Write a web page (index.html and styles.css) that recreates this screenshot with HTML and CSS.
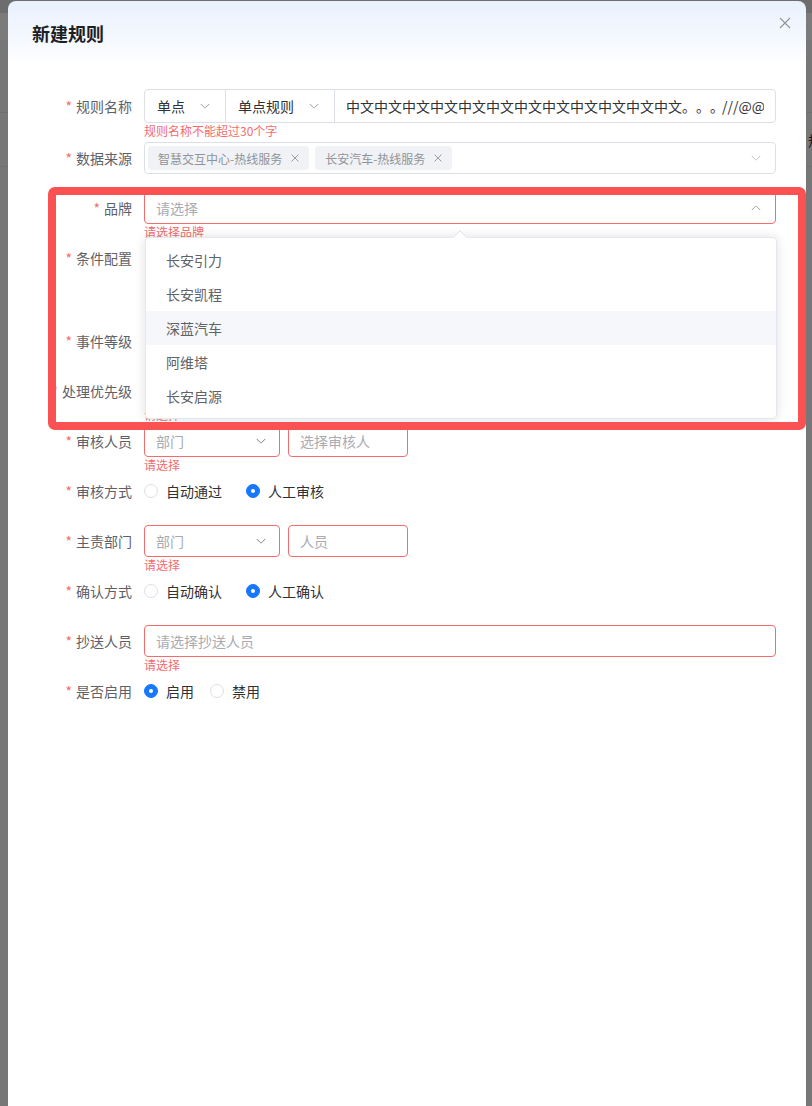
FILE: index.html
```html
<!DOCTYPE html>
<html lang="zh-CN">
<head>
<meta charset="utf-8">
<title>新建规则</title>
<link rel="stylesheet" href="styles.css">
</head>
<body>
<div class="stage">
<div class="modal">
  <div class="modal-head">
    <h1 class="title">新建规则</h1>
    <span class="close"><svg viewBox="0 0 12 12"><path d="M1 1L11 11M11 1L1 11"/></svg></span>
  </div>

  <div class="form">
    <div class="item has-err first">
      <div class="lbl"><span class="req">*</span>规则名称</div>
      <div class="ctrl">
        <div class="group">
          <div class="gsel s1"><span>单点</span><svg class="chev" viewBox="0 0 1024 1024"><path d="M831.872 340.864 512 652.672 192.128 340.864a30.592 30.592 0 0 0-42.752 0 29.12 29.12 0 0 0 0 41.6L489.664 714.24a32 32 0 0 0 44.672 0l340.288-331.712a29.12 29.12 0 0 0 0-41.728 30.592 30.592 0 0 0-42.752 0z"/></svg></div>
          <div class="gsel s2"><span>单点规则</span><svg class="chev" viewBox="0 0 1024 1024"><path d="M831.872 340.864 512 652.672 192.128 340.864a30.592 30.592 0 0 0-42.752 0 29.12 29.12 0 0 0 0 41.6L489.664 714.24a32 32 0 0 0 44.672 0l340.288-331.712a29.12 29.12 0 0 0 0-41.728 30.592 30.592 0 0 0-42.752 0z"/></svg></div>
          <div class="ginput"><div class="clip">中文中文中文中文中文中文中文中文中文中文中文中文<span class="dots">。。。</span>///@@@@@@</div></div>
        </div>
        <div class="err e19">规则名称不能超过30个字</div>
      </div>
    </div>

    <div class="item">
      <div class="lbl"><span class="req">*</span>数据来源</div>
      <div class="ctrl">
        <div class="box tags-box">
          <div class="tags">
            <span class="tag">智慧交互中心-热线服务<svg class="tag-x" viewBox="0 0 10 10"><path d="M1.5 1.5L8.5 8.5M8.5 1.5L1.5 8.5"/></svg></span>
            <span class="tag">长安汽车-热线服务<svg class="tag-x" viewBox="0 0 10 10"><path d="M1.5 1.5L8.5 8.5M8.5 1.5L1.5 8.5"/></svg></span>
          </div>
          <svg class="chev light" viewBox="0 0 1024 1024"><path d="M831.872 340.864 512 652.672 192.128 340.864a30.592 30.592 0 0 0-42.752 0 29.12 29.12 0 0 0 0 41.6L489.664 714.24a32 32 0 0 0 44.672 0l340.288-331.712a29.12 29.12 0 0 0 0-41.728 30.592 30.592 0 0 0-42.752 0z"/></svg>
        </div>
      </div>
    </div>

    <div class="item has-err">
      <div class="lbl"><span class="req">*</span>品牌</div>
      <div class="ctrl anchor">
        <div class="box red">
          <span class="ph">请选择</span>
          <svg class="chev up" viewBox="0 0 1024 1024"><path d="M831.872 340.864 512 652.672 192.128 340.864a30.592 30.592 0 0 0-42.752 0 29.12 29.12 0 0 0 0 41.6L489.664 714.24a32 32 0 0 0 44.672 0l340.288-331.712a29.12 29.12 0 0 0 0-41.728 30.592 30.592 0 0 0-42.752 0z"/></svg>
        </div>
        <div class="err">请选择品牌</div>
        <div class="dropdown">
          <span class="pop-arrow"></span>
          <ul class="options">
            <li>长安引力</li>
            <li>长安凯程</li>
            <li class="hover">深蓝汽车</li>
            <li>阿维塔</li>
            <li>长安启源</li>
          </ul>
        </div>
      </div>
    </div>

    <div class="item">
      <div class="lbl"><span class="req">*</span>条件配置</div>
      <div class="ctrl tall"></div>
    </div>

    <div class="item">
      <div class="lbl"><span class="req">*</span>事件等级</div>
      <div class="ctrl blank"></div>
    </div>

    <div class="item has-err">
      <div class="lbl"><span class="req">*</span>处理优先级</div>
      <div class="ctrl">
        <div class="blank"></div>
        <div class="err">请选择</div>
      </div>
    </div>

    <div class="item has-err">
      <div class="lbl"><span class="req">*</span>审核人员</div>
      <div class="ctrl">
        <div class="pair">
          <div class="box red dept"><span class="ph">部门</span><svg class="chev dark" viewBox="0 0 1024 1024"><path d="M831.872 340.864 512 652.672 192.128 340.864a30.592 30.592 0 0 0-42.752 0 29.12 29.12 0 0 0 0 41.6L489.664 714.24a32 32 0 0 0 44.672 0l340.288-331.712a29.12 29.12 0 0 0 0-41.728 30.592 30.592 0 0 0-42.752 0z"/></svg></div>
          <div class="box red person"><span class="ph">选择审核人</span></div>
        </div>
        <div class="err">请选择</div>
      </div>
    </div>

    <div class="item">
      <div class="lbl"><span class="req">*</span>审核方式</div>
      <div class="ctrl">
        <div class="radios wide">
          <span class="radio"><span class="dot"></span>自动通过</span>
          <span class="radio on"><span class="dot"></span>人工审核</span>
        </div>
      </div>
    </div>

    <div class="item has-err">
      <div class="lbl"><span class="req">*</span>主责部门</div>
      <div class="ctrl">
        <div class="pair">
          <div class="box red dept"><span class="ph">部门</span><svg class="chev dark" viewBox="0 0 1024 1024"><path d="M831.872 340.864 512 652.672 192.128 340.864a30.592 30.592 0 0 0-42.752 0 29.12 29.12 0 0 0 0 41.6L489.664 714.24a32 32 0 0 0 44.672 0l340.288-331.712a29.12 29.12 0 0 0 0-41.728 30.592 30.592 0 0 0-42.752 0z"/></svg></div>
          <div class="box red person"><span class="ph">人员</span></div>
        </div>
        <div class="err">请选择</div>
      </div>
    </div>

    <div class="item">
      <div class="lbl"><span class="req">*</span>确认方式</div>
      <div class="ctrl">
        <div class="radios wide">
          <span class="radio"><span class="dot"></span>自动确认</span>
          <span class="radio on"><span class="dot"></span>人工确认</span>
        </div>
      </div>
    </div>

    <div class="item has-err">
      <div class="lbl"><span class="req">*</span>抄送人员</div>
      <div class="ctrl">
        <div class="box red"><span class="ph">请选择抄送人员</span></div>
        <div class="err">请选择</div>
      </div>
    </div>

    <div class="item">
      <div class="lbl"><span class="req">*</span>是否启用</div>
      <div class="ctrl">
        <div class="radios narrow">
          <span class="radio on"><span class="dot"></span>启用</span>
          <span class="radio"><span class="dot"></span>禁用</span>
        </div>
      </div>
    </div>
  </div>
</div>
<div class="bg-right"><span class="bg-text">规则</span></div>
</div>

<div class="annot"></div>
</body>
</html>
```

FILE: styles.css
```css
* { box-sizing: border-box; }

html, body {
  margin: 0;
  height: 1106px;
  overflow: hidden;
}

body {
  font-family: "Noto Sans CJK SC", "Noto Sans", "Liberation Sans", sans-serif;
  background: linear-gradient(to bottom,
    #6d6d6e 0, #6d6d6e 13px,
    #7b7b7b 13px, #7b7b7b 40px,
    #777777 40px, #777777 112px,
    #6f6f6f 112px, #6f6f6f 113px,
    #777777 113px, #777777 166px,
    #707070 166px, #707070 167px,
    #777777 167px);
  position: relative;
}

.stage {
  display: flex;
  align-items: flex-start;
  padding-left: 8px;
}

.modal {
  flex: none;
  width: 798px;
  margin-top: 1px;
  height: 1110px;
  background: #fff;
  border-radius: 8px 8px 0 0;
  background-image: linear-gradient(to bottom, #e9f1fe 0, #f4f8fe 35px, #ffffff 64px);
}

.bg-right {
  flex: none;
  width: 6px;
  overflow: hidden;
  padding-top: 130px;
}

.bg-text {
  display: block;
  margin-left: 2px;
  width: 40px;
  font-size: 14px;
  line-height: 20px;
  color: #1a1a1a;
  white-space: nowrap;
}

.modal-head {
  display: flex;
  justify-content: space-between;
  align-items: flex-start;
  padding: 20px 13px 0 24px;
}

.title {
  margin: 0;
  font-size: 18px;
  line-height: 24px;
  font-weight: 700;
  color: #1d1f24;
}

.close {
  width: 16px;
  height: 16px;
  margin-top: -6px;
  display: flex;
  align-items: center;
  justify-content: center;
}

.close svg {
  width: 12px;
  height: 12px;
  stroke: #8f939b;
  stroke-width: 1.1;
  fill: none;
}

.form {
  margin-top: 44px;
  padding: 0 30px 0 24px;
}

.item {
  display: grid;
  grid-template-columns: 112px 1fr;
  margin-bottom: 18px;
}

.item.has-err { margin-bottom: 0; }

.lbl {
  text-align: right;
  padding-right: 12px;
  font-size: 14px;
  line-height: 32px;
  height: 32px;
  color: #5e6168;
  white-space: nowrap;
}

.first .lbl { line-height: 34px; height: 34px; }

.req {
  color: #f56c6c;
  margin-right: 4px;
}

.ctrl { min-width: 0; }

.anchor { position: relative; }

.tall { height: 65px; }
.blank { height: 32px; }

.err {
  height: 18px;
  padding-top: 2px;
  font-size: 12px;
  line-height: 12px;
  color: #f56c6c;
  white-space: nowrap;
}

.err.e19 { height: 19px; }

/* composite group */
.group {
  display: flex;
  height: 34px;
  border: 1px solid #dcdfe6;
  border-radius: 4px;
  font-size: 14px;
  color: #303133;
}

.gsel {
  display: flex;
  align-items: center;
  justify-content: space-between;
  border-right: 1px solid #dcdfe6;
  padding: 0 14px 0 12px;
  flex: none;
}

.gsel.s1 { width: 81px; }
.gsel.s2 { width: 109px; }

.ginput {
  flex: 1;
  min-width: 0;
  padding: 0 11px;
  display: flex;
  align-items: center;
}

.clip {
  overflow: hidden;
  white-space: nowrap;
  width: 100%;
  text-spacing-trim: space-all;
}

.dots {
  display: inline-block;
  width: 40px;
  letter-spacing: 0;
}

.chev {
  width: 12px;
  height: 12px;
  fill: #8d9199;
  flex: none;
}

.chev.light { fill: #b6b9c0; }
.chev.dark { fill: #6b6f77; }
.chev.up { transform: rotate(180deg); fill: #8d9199; }

/* boxes */
.box {
  display: flex;
  align-items: center;
  justify-content: space-between;
  height: 32px;
  border: 1px solid #dcdfe6;
  border-radius: 4px;
  padding: 0 13px 0 11px;
  font-size: 14px;
  background: #fff;
}

.box.red { border-color: #f56c6c; }

.ph { color: #a8abb2; white-space: nowrap; }

.tags-box { padding: 0 13px 0 3px; }

.tags {
  display: flex;
  gap: 6px;
}

.tag {
  display: inline-flex;
  align-items: center;
  height: 24px;
  padding: 0 9px 0 10px;
  background: #f0f2f5;
  border-radius: 4px;
  font-size: 12px;
  color: #909399;
  gap: 8px;
  white-space: nowrap;
}

.tag-x {
  width: 10px;
  height: 10px;
  stroke: #9a9da4;
  stroke-width: 1;
  fill: none;
}

.pair {
  display: flex;
  gap: 8px;
}

.dept { width: 136px; padding-right: 12px; }
.person { width: 120px; }

/* radios */
.radios {
  display: flex;
  align-items: center;
  height: 32px;
}

.radios.wide { gap: 24px; }
.radios.narrow { gap: 16px; }

.radio {
  display: flex;
  align-items: center;
  gap: 8px;
  font-size: 14px;
  color: #303133;
  white-space: nowrap;
}

.dot {
  width: 14px;
  height: 14px;
  border-radius: 50%;
  border: 1px solid #dcdfe6;
  background: #fff;
  display: flex;
  align-items: center;
  justify-content: center;
}

.radio.on .dot {
  background: #1677ff;
  border-color: #1677ff;
}

.radio.on .dot::after {
  content: "";
  width: 4px;
  height: 4px;
  border-radius: 50%;
  background: #fff;
}

/* dropdown */
.dropdown {
  position: absolute;
  top: 45px;
  left: 1px;
  width: 632px;
  background: #fff;
  border: 1px solid #e4e7ed;
  border-radius: 4px;
  box-shadow: 0 0 12px rgba(0, 0, 0, 0.12);
  z-index: 10;
}

.pop-arrow {
  position: absolute;
  top: -6px;
  left: 309px;
  width: 10px;
  height: 10px;
  background: #fff;
  border-top: 1px solid #e4e7ed;
  border-left: 1px solid #e4e7ed;
  transform: rotate(45deg);
}

.options {
  list-style: none;
  margin: 0;
  padding: 5px 0;
  position: relative;
}

.options li {
  height: 34px;
  line-height: 34px;
  padding: 0 20px;
  font-size: 14px;
  color: #606266;
}

.options li.hover { background: #f5f7fa; }

/* annotation rectangle */
.annot {
  position: absolute;
  left: 48px;
  top: 187px;
  width: 758px;
  height: 243px;
  border: 8px solid #fa5252;
  border-radius: 7px;
  z-index: 20;
}
```
